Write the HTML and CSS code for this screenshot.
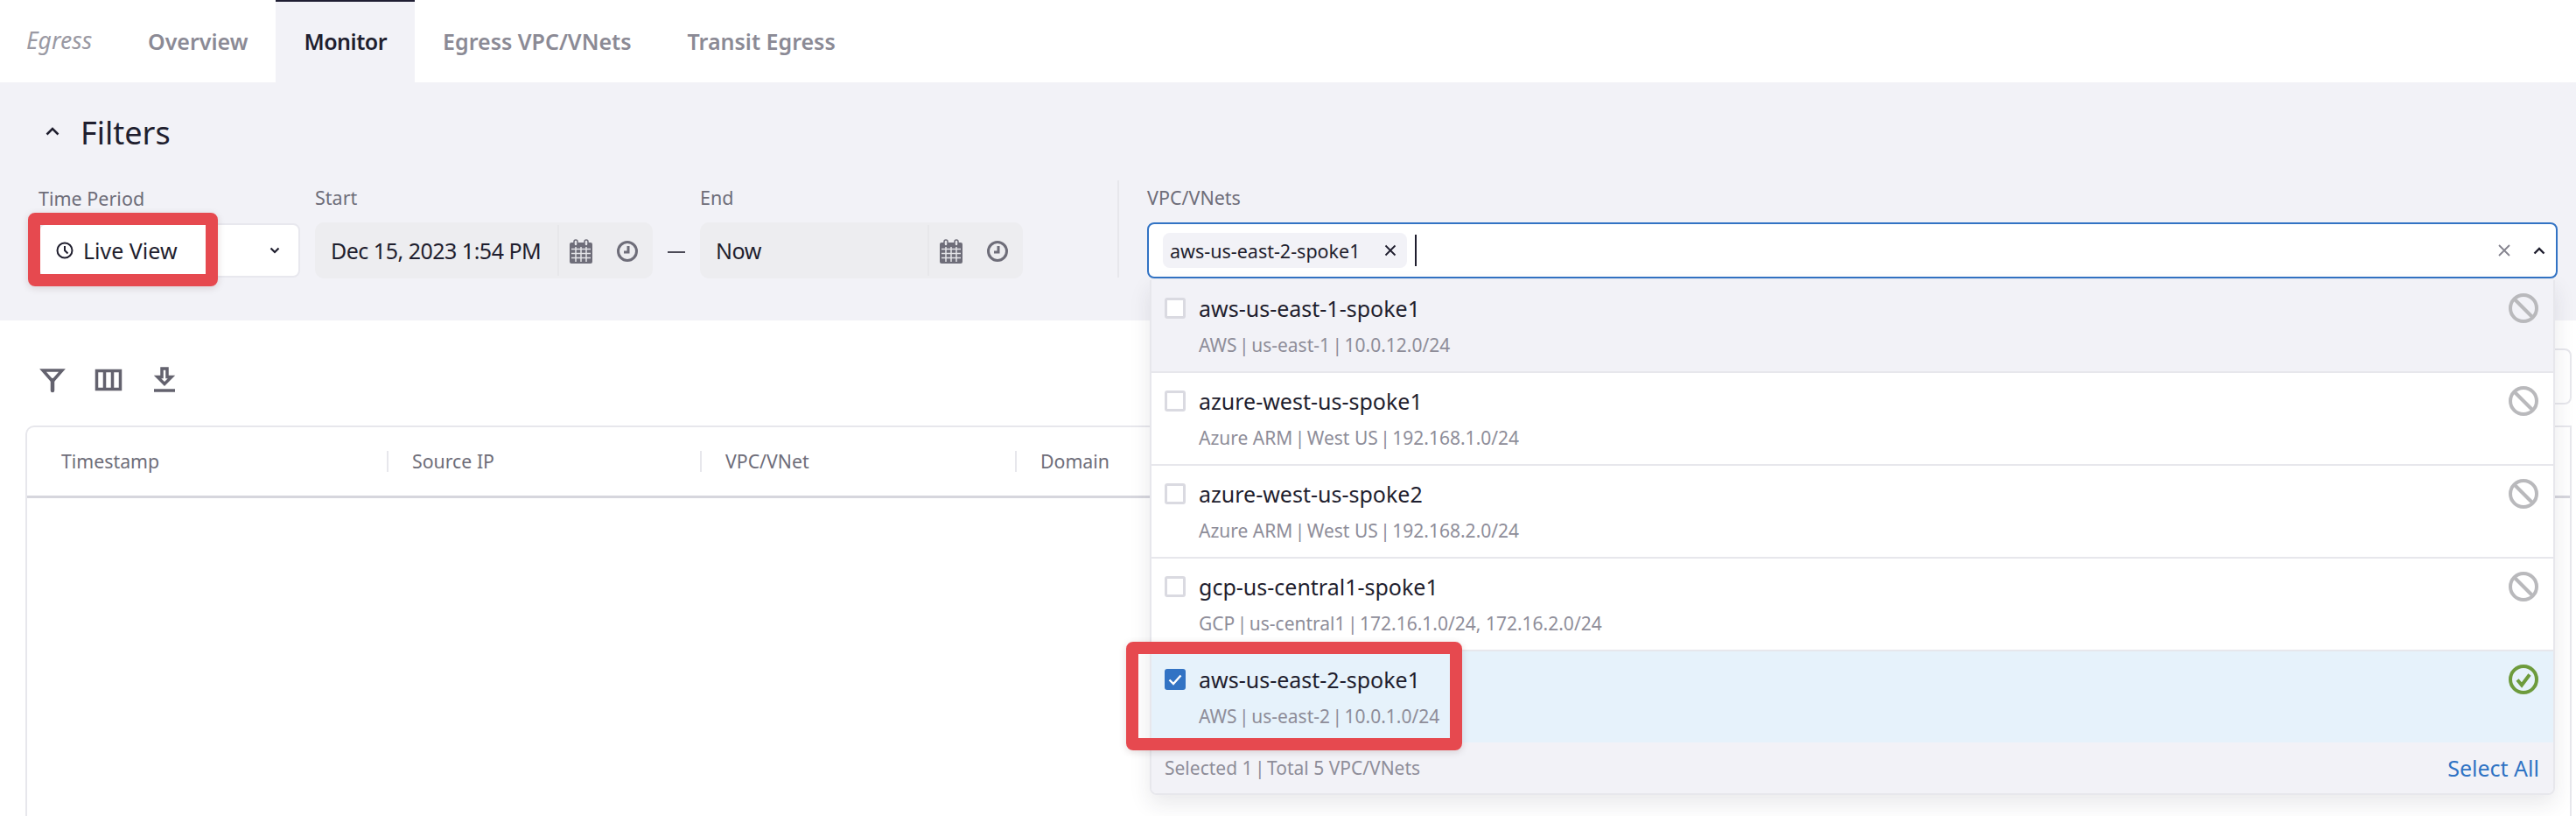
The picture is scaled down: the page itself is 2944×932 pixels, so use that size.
FILE: index.html
```html
<!DOCTYPE html>
<html>
	<head>
		<meta charset="utf-8">
		<title>Egress Monitor</title>
		<link rel="stylesheet" href="styles.css">
	</head>
	<body>
		<div id="page">
			<div class="tabs">
				<span class="tabs-title">Egress</span>
				<a class="tab">Overview</a>
				<a class="tab active">Monitor</a>
				<a class="tab">Egress VPC/VNets</a>
				<a class="tab">Transit Egress</a>
			</div>

			<div class="filters">
				<div class="filters-head">
					<svg class="head-chevron" viewBox="0 0 16 10"><path d="M1.500 8.500 8 2l6.500 6.500"/></svg>
					<span>Filters</span>
				</div>
				<div class="filters-row">
					<div class="field field-period">
						<label>Time Period</label>
						<div class="select">
							<svg class="live-clock" viewBox="0 0 20 20"><circle cx="10" cy="10" r="8.500"/><path d="M10 5v5l3.500 3.500"/></svg>
							<span>Live View</span>
							<svg class="select-chevron" viewBox="0 0 12 8"><path d="M1.500 1.500 6 6l4.500-4.500"/></svg>
						</div>
					</div>
					<div class="field field-start">
						<label>Start</label>
						<div class="date">
							<span class="date-text">Dec 15, 2023 1:54 PM</span>
							<span class="date-icons">
								<svg class="cal" viewBox="0 0 26 28"><path class="cal-body" d="M2 4h22a2 2 0 0 1 2 2v20a2 2 0 0 1-2 2H2a2 2 0 0 1-2-2V6a2 2 0 0 1 2-2z"/><path class="cal-grid" d="M2 11.500h22M2 16.500h22M2 21.500h22M7 9v17M13 9v17M19 9v17"/><rect class="cal-ring" x="5" y="1" width="4" height="7" rx="2"/><rect class="cal-ring" x="17" y="1" width="4" height="7" rx="2"/></svg>
								<svg class="clk" viewBox="0 0 24 24"><circle cx="12" cy="12" r="10.500"/><path d="M13 6v7H8"/></svg>
							</span>
						</div>
					</div>
					<span class="dash"></span>
					<div class="field field-end">
						<label>End</label>
						<div class="date">
							<span class="date-text">Now</span>
							<span class="date-icons">
								<svg class="cal" viewBox="0 0 26 28"><path class="cal-body" d="M2 4h22a2 2 0 0 1 2 2v20a2 2 0 0 1-2 2H2a2 2 0 0 1-2-2V6a2 2 0 0 1 2-2z"/><path class="cal-grid" d="M2 11.500h22M2 16.500h22M2 21.500h22M7 9v17M13 9v17M19 9v17"/><rect class="cal-ring" x="5" y="1" width="4" height="7" rx="2"/><rect class="cal-ring" x="17" y="1" width="4" height="7" rx="2"/></svg>
								<svg class="clk" viewBox="0 0 24 24"><circle cx="12" cy="12" r="10.500"/><path d="M13 6v7H8"/></svg>
							</span>
						</div>
					</div>
					<div class="field field-vpc">
						<label>VPC/VNets</label>
						<div class="multi">
							<span class="chip">
								<span>aws-us-east-2-spoke1</span>
								<svg class="chip-x" viewBox="0 0 14 14"><path d="M1.500 1.500l11 11M12.500 1.500l-11 11"/></svg>
							</span>
							<span class="caret"></span>
							<svg class="clear-x" viewBox="0 0 14 14"><path d="M1 1l12 12M13 1 1 13"/></svg>
							<svg class="multi-chevron" viewBox="0 0 14 9"><path d="M1.500 7.500 7 2l5.500 5.500"/></svg>
						</div>
						<div class="dropdown">
							<div class="option hover">
								<span class="check"></span>
								<div class="option-text">
									<div class="option-name">aws-us-east-1-spoke1</div>
									<div class="option-sub">AWS <span class="sep">|</span> us-east-1 <span class="sep">|</span> 10.0.12.0/24</div>
								</div>
								<svg class="status ban" viewBox="0 0 34 34"><circle cx="17" cy="17" r="15"/><path d="M6.500 6.500l21 21"/></svg>
							</div>
							<div class="option">
								<span class="check"></span>
								<div class="option-text">
									<div class="option-name">azure-west-us-spoke1</div>
									<div class="option-sub">Azure ARM <span class="sep">|</span> West US <span class="sep">|</span> 192.168.1.0/24</div>
								</div>
								<svg class="status ban" viewBox="0 0 34 34"><circle cx="17" cy="17" r="15"/><path d="M6.500 6.500l21 21"/></svg>
							</div>
							<div class="option">
								<span class="check"></span>
								<div class="option-text">
									<div class="option-name">azure-west-us-spoke2</div>
									<div class="option-sub">Azure ARM <span class="sep">|</span> West US <span class="sep">|</span> 192.168.2.0/24</div>
								</div>
								<svg class="status ban" viewBox="0 0 34 34"><circle cx="17" cy="17" r="15"/><path d="M6.500 6.500l21 21"/></svg>
							</div>
							<div class="option">
								<span class="check"></span>
								<div class="option-text">
									<div class="option-name">gcp-us-central1-spoke1</div>
									<div class="option-sub">GCP <span class="sep">|</span> us-central1 <span class="sep">|</span> 172.16.1.0/24, 172.16.2.0/24</div>
								</div>
								<svg class="status ban" viewBox="0 0 34 34"><circle cx="17" cy="17" r="15"/><path d="M6.500 6.500l21 21"/></svg>
							</div>
							<div class="option selected">
								<span class="check checked">
									<svg viewBox="0 0 24 24"><path d="M5.500 12.500l4.500 4.500 8.500-9.500"/></svg>
								</span>
								<div class="option-text">
									<div class="option-name">aws-us-east-2-spoke1</div>
									<div class="option-sub">AWS <span class="sep">|</span> us-east-2 <span class="sep">|</span> 10.0.1.0/24</div>
								</div>
								<svg class="status ok" viewBox="0 0 34 34"><circle cx="17" cy="17" r="15"/><path d="M10 17.500l5 6 9-12"/></svg>
							</div>
							<div class="dropdown-foot">
								<span class="foot-count">Selected 1 <span class="sep">|</span> Total 5 VPC/VNets</span>
								<a class="select-all">Select All</a>
							</div>
						</div>
					</div>
				</div>
			</div>

			<div class="results">
				<div class="toolbar">
					<div class="tools">
						<svg class="tool" viewBox="0 0 32 32"><path d="M5 5h22L16 17.500z" class="tool-line"/><path d="M16 16v12" class="tool-fat"/></svg>
						<svg class="tool" viewBox="0 0 32 32"><rect x="2.500" y="5.500" width="27" height="21" class="tool-line"/><path d="M11.500 5v22M20.500 5v22" class="tool-line"/></svg>
						<svg class="tool" viewBox="0 0 32 32"><path d="M13 3h6v9.500h5L16 20.500 8 12.500h5z" class="tool-line"/><path d="M4 28h24" class="tool-line"/></svg>
					</div>
					<div class="search"></div>
				</div>
				<div class="table">
					<div class="thead">
						<div class="th"><span>Timestamp</span></div>
						<div class="th"><span>Source IP</span></div>
						<div class="th"><span>VPC/VNet</span></div>
						<div class="th"><span>Domain</span></div>
					</div>
				</div>
			</div>

			<div class="mark mark-period"></div>
			<div class="mark mark-option"></div>
		</div>
	</body>
</html>
```

FILE: styles.css
```css
*{
	margin: 0;
	padding: 0;
	box-sizing: border-box;
}
body{
	background-color: #fff;
	color: #1f1e2e;
	font-family: "Noto Sans", "Open Sans", sans-serif;
	font-size: 25px;
}
svg{
	display: block;
	fill: none;
	flex: none;
}
#page{
	position: relative;
	width: 2944px;
	height: 932px;
	overflow: hidden;
}

/* tabs */
.tabs{
	display: flex;
	align-items: stretch;
	height: 94px;
	padding-left: 30px;
	font-size: 25px;
	font-weight: 600;
	color: #8b8a95;
}
.tabs-title{
	align-self: center;
	width: 107px;
	padding-bottom: 2px;
	font-size: 26.500px;
	font-style: italic;
	font-weight: 400;
	color: #9a99a3;
}
.tab{
	display: flex;
	align-items: center;
	padding: 0 32px 3px;
	border-top: 2px solid transparent;
}
.tab.active{
	background-color: #f2f2f7;
	border-top-color: #1f1e33;
	color: #1f1e2e;
	letter-spacing: -0.500px;
}

/* filters */
.filters{
	height: 272px;
	padding-top: 34px;
	background-color: #f2f2f7;
}
.filters-head{
	display: flex;
	align-items: center;
	gap: 24px;
	height: 46px;
	padding-left: 52px;
	font-size: 36px;
}
.head-chevron{
	width: 16px;
	height: 10px;
	margin-top: -2px;
	stroke: #1f1e2e;
	stroke-width: 2.500;
}
.filters-row{
	display: flex;
	align-items: flex-end;
	margin-top: 38px;
	padding-left: 44px;
}
.field label{
	display: block;
	height: 30px;
	margin-bottom: 12px;
	font-size: 21.500px;
	line-height: 28px;
	color: #6e6d79;
}
.field-period{
	width: 299px;
	margin-right: 17px;
}
.field-start{
	width: 386px;
}
.field-end{
	width: 369px;
}
.field-vpc{
	position: relative;
	width: 1612px;
	margin-left: 142px;
}
.field-vpc:before{
	content: "";
	position: absolute;
	left: -34px;
	top: -6px;
	bottom: 1px;
	border-left: 2px solid #e7e7ec;
}
.dash{
	width: 20px;
	height: 2px;
	margin: 0 17px 29px;
	background-color: #4c4b57;
}

.select{
	display: flex;
	align-items: center;
	height: 62px;
	margin: 1px 0;
	padding-left: 18px;
	background-color: #fff;
	border: 2px solid #e8e8ee;
	border-radius: 8px;
}
.live-clock{
	width: 20px;
	height: 20px;
	margin-right: 11px;
	stroke: #1f1e2e;
	stroke-width: 2;
}
.select-chevron{
	width: 12px;
	height: 8px;
	margin-left: auto;
	margin-right: 21px;
	stroke: #1f1e2e;
	stroke-width: 2.200;
}
.date{
	display: flex;
	align-items: center;
	height: 64px;
	background-color: #ededf0;
	border-radius: 10px;
}
.date-text{
	flex: 1;
	padding-left: 18px;
	letter-spacing: -0.500px;
}
.date-icons{
	display: flex;
	align-items: center;
	gap: 28px;
	height: 58px;
	padding: 2px 17px 0 12px;
	border-left: 2px solid #e7e7ea;
}
.cal{
	width: 26px;
	height: 28px;
}
.cal-body{
	fill: #6e6d79;
}
.cal-grid{
	stroke: #e4e4e8;
	stroke-width: 1.500;
}
.cal-ring{
	fill: #e4e4e8;
	stroke: #6e6d79;
	stroke-width: 1.500;
}
.clk{
	width: 24px;
	height: 24px;
	stroke: #6e6d79;
	stroke-width: 3;
}

.multi{
	display: flex;
	align-items: center;
	height: 64px;
	padding-left: 16px;
	background-color: #fff;
	border: 2px solid #3273c4;
	border-radius: 8px;
}
.chip{
	display: flex;
	align-items: center;
	justify-content: space-between;
	width: 279px;
	height: 40px;
	padding: 0 12px 0 8px;
	background-color: #f2f2f7;
	border-radius: 8px;
	font-size: 21.500px;
}
.chip-x{
	width: 14px;
	height: 14px;
	stroke: #1f1e2e;
	stroke-width: 1.800;
}
.caret{
	width: 2px;
	height: 36px;
	margin-left: 9px;
	background-color: #1f1e2e;
}
.clear-x{
	width: 14px;
	height: 14px;
	margin-left: auto;
	stroke: #85848f;
	stroke-width: 1.800;
}
.multi-chevron{
	width: 14px;
	height: 9px;
	margin: 0 12px 0 26px;
	stroke: #1f1e2e;
	stroke-width: 2.400;
}

/* dropdown */
.dropdown{
	position: absolute;
	top: 108px;
	left: 3px;
	width: 1606px;
	background-color: #fff;
	border: 2px solid #e7e7ec;
	border-top: 0;
	border-radius: 0 0 8px 8px;
	box-shadow: 0 10px 24px rgba(40, 40, 60, 0.10);
}
.option{
	display: flex;
	align-items: flex-start;
	height: 106px;
	padding: 16px 17px 0 15px;
	border-bottom: 2px solid #e7e7ec;
}
.option.hover{
	background-color: #f2f2f7;
}
.option.selected{
	height: 104px;
	background-color: #e6f2fb;
	border-bottom: 0;
}
.check{
	width: 24px;
	height: 24px;
	margin-top: 4px;
	background-color: #fff;
	border: 3px solid #dadae1;
	border-radius: 3px;
}
.check.checked{
	background-color: #3273c4;
	border: 0;
}
.check svg{
	width: 24px;
	height: 24px;
	stroke: #fff;
	stroke-width: 2.400;
}
.option-text{
	margin-left: 15px;
}
.option-name{
	height: 34px;
	line-height: 32px;
}
.option-sub{
	height: 30px;
	margin-top: 9px;
	font-size: 21px;
	line-height: 30px;
	color: #8e8d99;
}
.sep{
	margin: 0 -3px;
}
.status{
	width: 34px;
	height: 34px;
	margin-left: auto;
	margin-top: -1px;
	stroke-width: 4;
}
.ban{
	stroke: #b9b9bc;
}
.ok{
	stroke: #6d9b3c;
}
.dropdown-foot{
	display: flex;
	align-items: center;
	justify-content: space-between;
	height: 58px;
	padding: 0 16px 0 15px;
	background-color: #f2f2f7;
	border-radius: 0 0 6px 6px;
	color: #8e8d99;
}
.foot-count{
	font-size: 21px;
}
.select-all{
	color: #2f73c4;
}

/* results */
.toolbar{
	display: flex;
	justify-content: space-between;
	padding: 32px 5px 24px 44px;
}
.tools{
	display: flex;
	align-self: center;
	gap: 32px;
	margin-top: 8px;
}
.tool{
	width: 32px;
	height: 32px;
}
.tool-line{
	stroke: #63626e;
	stroke-width: 3.500;
}
.tool-fat{
	stroke: #63626e;
	stroke-width: 4.500;
	stroke-linecap: round;
}
.search{
	width: 300px;
	height: 64px;
	border: 2px solid #e7e7ec;
	border-radius: 8px;
}
.table{
	height: 446px;
	margin: 0 5px 0 29px;
	border: 2px solid #e7e7ec;
	border-bottom: 0;
	border-radius: 10px 0 0 0;
}
.thead{
	display: grid;
	grid-template-columns: 411px 358px 360px 1fr;
	align-items: center;
	height: 81px;
	border-bottom: 3px solid #d6d6dd;
	font-size: 21.300px;
	color: #6e6d79;
}
.th span{
	display: block;
	line-height: 24px;
	padding-left: 27px;
	border-left: 2px solid #e7e7ec;
}
.th:first-child span{
	padding-left: 39px;
	border-left: 0;
}

/* red call-out frames */
.mark{
	position: absolute;
	border: 14px solid #e6494f;
	border-radius: 8px;
	box-shadow: 0 2px 8px rgba(60, 20, 20, 0.15);
}
.mark-period{
	left: 32px;
	top: 243px;
	width: 217px;
	height: 84px;
}
.mark-option{
	left: 1287px;
	top: 733px;
	width: 384px;
	height: 124px;
}
```
